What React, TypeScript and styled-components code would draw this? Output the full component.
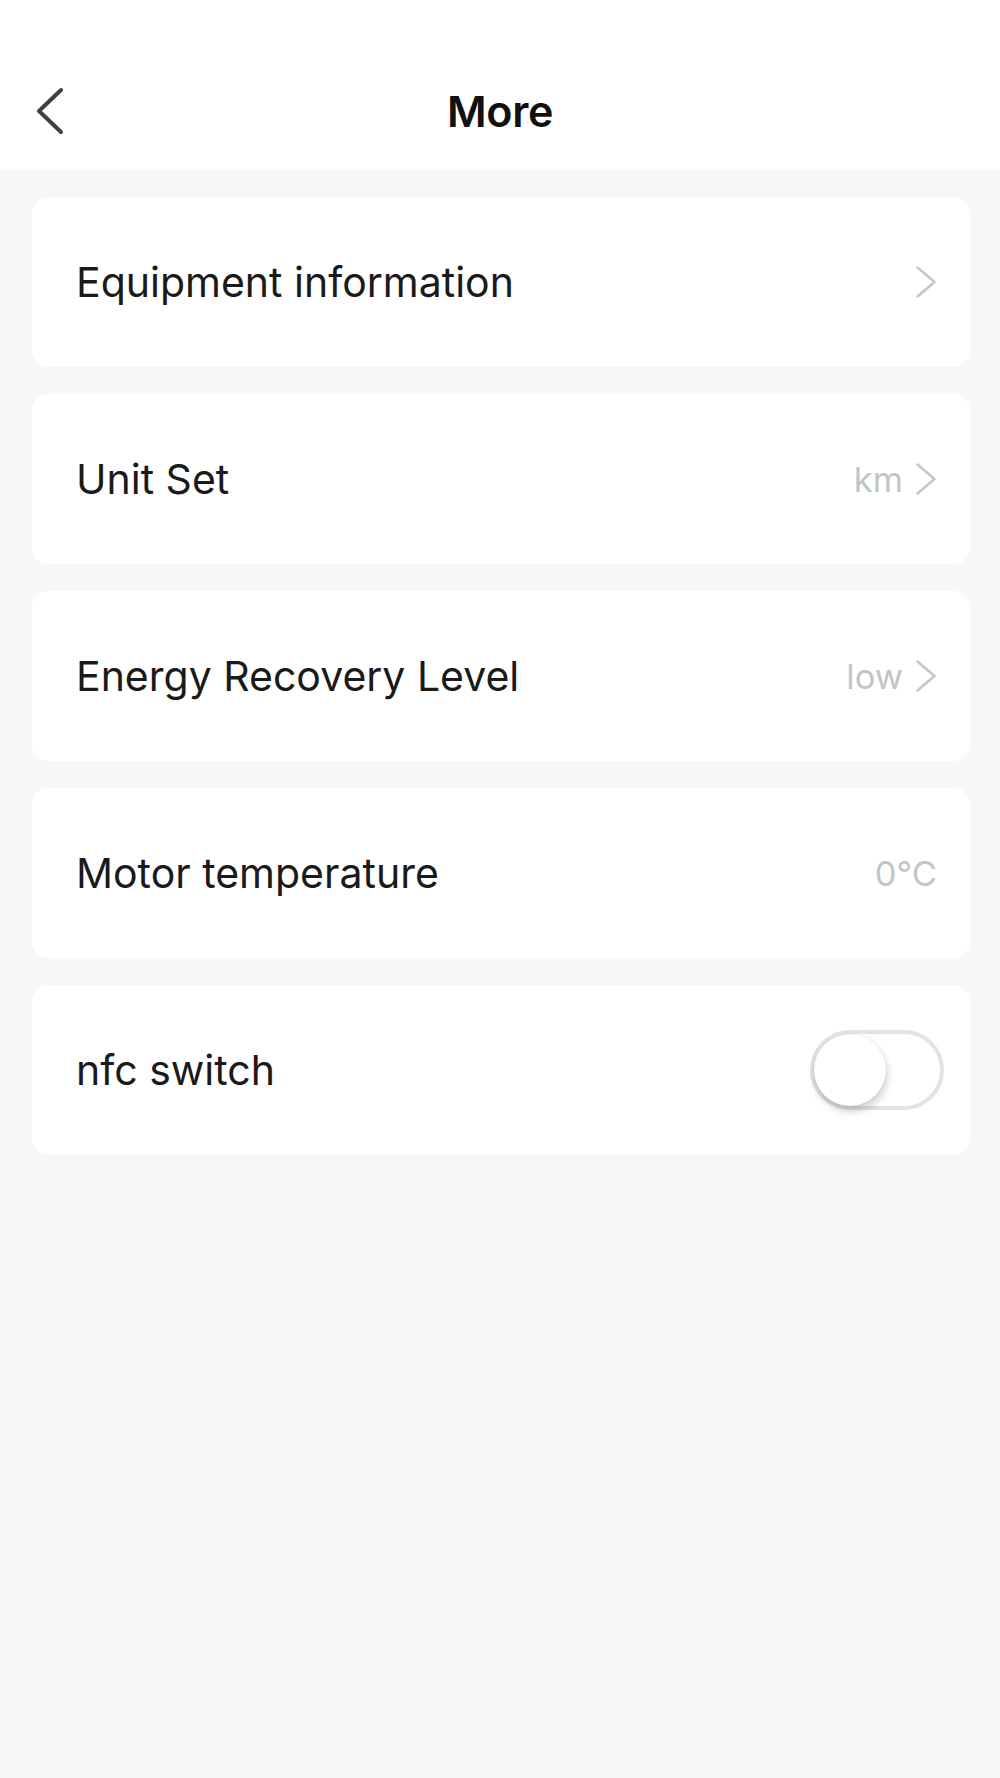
import React, { FC, useState } from 'react'
import styled, { createGlobalStyle } from 'styled-components'

const GlobalStyle = createGlobalStyle`
  html, body {
    margin: 0;
    padding: 0;
    background: #f7f7f7;
  }
  body {
    font-family: Inter, "Noto Sans", "Liberation Sans", sans-serif;
    -webkit-font-smoothing: antialiased;
  }
`

interface Item {
  label: string
  value?: string
  arrow?: boolean
  toggle?: boolean
}

const ITEMS: Item[] = [
  { label: 'Equipment information', arrow: true },
  { label: 'Unit Set', value: 'km', arrow: true },
  { label: 'Energy Recovery Level', value: 'low', arrow: true },
  { label: 'Motor temperature', value: '0°C' },
  { label: 'nfc switch', toggle: true },
]

const Chevron: FC<{ color: string; width: number; height: number; stroke: number; flip?: boolean }> = ({
  color,
  width,
  height,
  stroke,
  flip,
}) => (
  <svg width={width} height={height} viewBox={`0 0 ${width} ${height}`} fill="none">
    <polyline
      points={
        flip
          ? `${width - stroke},${stroke} ${stroke},${height / 2} ${width - stroke},${height - stroke}`
          : `${stroke},${stroke} ${width - stroke},${height / 2} ${stroke},${height - stroke}`
      }
      stroke={color}
      strokeWidth={stroke}
      strokeLinecap="round"
      strokeLinejoin="round"
    />
  </svg>
)

const App: FC = () => {
  const [nfc, setNfc] = useState(false)

  return (
    <>
      <GlobalStyle />
      <S.Page>
        <S.Header>
          <S.BackButton>
            <Chevron color="#404040" width={30} height={50} stroke={4} flip />
          </S.BackButton>
          <S.Title>More</S.Title>
        </S.Header>
        <S.List>
          {ITEMS.map((item) => (
            <S.Card key={item.label}>
              <S.Label>{item.label}</S.Label>
              <S.Right>
                {item.value && <S.Value>{item.value}</S.Value>}
                {item.arrow && <Chevron color="#c6c6c6" width={22} height={34} stroke={2.5} />}
                {item.toggle && (
                  <S.Toggle $on={nfc} onClick={() => setNfc(!nfc)}>
                    <S.Knob $on={nfc} />
                  </S.Toggle>
                )}
              </S.Right>
            </S.Card>
          ))}
        </S.List>
      </S.Page>
    </>
  )
}

const S = {
  Page: styled.div`
    min-height: 1778px;
    background: #f7f7f7;
  `,
  Header: styled.header`
    position: relative;
    height: 170px;
    background: #ffffff;
    display: flex;
    align-items: center;
    justify-content: center;
    padding-top: 52px;
    box-sizing: border-box;
  `,
  BackButton: styled.div`
    position: absolute;
    left: 35px;
    top: 86px;
    display: flex;
  `,
  Title: styled.h1`
    margin: 0;
    font-size: 43px;
    font-weight: 600;
    color: #111111;
    letter-spacing: -0.3px;
  `,
  List: styled.div`
    display: flex;
    flex-direction: column;
    gap: 27px;
    padding: 27px 30px 0 32px;
  `,
  Card: styled.div`
    height: 170px;
    background: #ffffff;
    border-radius: 16px;
    display: flex;
    align-items: center;
    justify-content: space-between;
    padding: 0 33px 0 44px;
  `,
  Label: styled.span`
    font-size: 41px;
    color: #1a1a1a;
    font-weight: 400;
  `,
  Right: styled.div`
    display: flex;
    align-items: center;
    gap: 12px;
  `,
  Value: styled.span`
    font-size: 34.5px;
    color: #c4c4c4;
  `,
  Toggle: styled.div<{ $on: boolean }>`
    position: relative;
    width: 134px;
    height: 80px;
    box-sizing: border-box;
    border-radius: 40px;
    border: 4px solid #e3e3e3;
    background: ${(p) => (p.$on ? '#4cd964' : '#ffffff')};
    margin-right: -7px;
    cursor: pointer;
  `,
  Knob: styled.div<{ $on: boolean }>`
    position: absolute;
    top: 0px;
    left: ${(p) => (p.$on ? '54px' : '0px')};
    width: 72px;
    height: 72px;
    border-radius: 50%;
    background: #ffffff;
    box-shadow: 1px 5px 8px rgba(0, 0, 0, 0.2), 0 0 1px rgba(0, 0, 0, 0.18);
  `,
}

export default App
